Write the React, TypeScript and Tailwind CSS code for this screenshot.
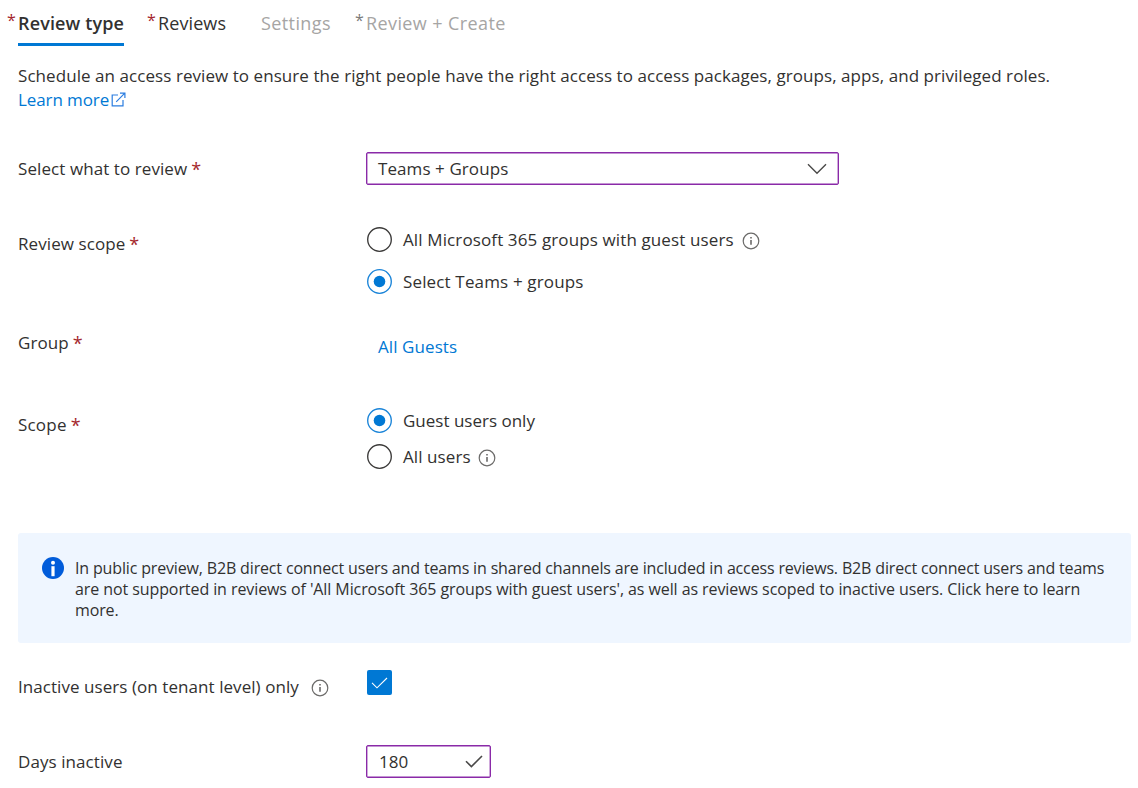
import type { ReactNode } from "react";

function InfoIcon({ className = "" }: { className?: string }) {
  return (
    <svg viewBox="0 0 18 18" className={`size-[18px] shrink-0 ${className}`} fill="none" stroke="#6b6a69">
      <circle cx="9" cy="9" r="7.8" strokeWidth="1.2" />
      <path d="M9 7.9v4.9M9 5v1.6" strokeWidth="1.6" />
    </svg>
  );
}

function Radio({ checked = false, children }: { checked?: boolean; children: ReactNode }) {
  return (
    <div className="flex h-[25px] items-center">
      <svg viewBox="0 0 25 25" className="size-[25px] shrink-0" fill="none">
        <circle cx="12.5" cy="12.5" r="11.8" stroke={checked ? "#1a84d8" : "#3b3a39"} strokeWidth="1.35" />
        {checked && <circle cx="12.5" cy="12.5" r="5.8" fill="#0078d4" />}
      </svg>
      <span className="ml-[11px] flex items-center">{children}</span>
    </div>
  );
}

function Star({ className = "" }: { className?: string }) {
  return <span className={`text-[18px] leading-6 font-medium text-[#a4262c] ${className}`}>*</span>;
}

function Label({ children, required = false, className = "" }: { children: ReactNode; required?: boolean; className?: string }) {
  return (
    <div className={`flex w-[348px] shrink-0 leading-6 ${className}`}>
      {children}
      {required && <Star className="ml-[4px] size-[9px]" />}
    </div>
  );
}

export default function App() {
  return (
    <div className="h-[788px] w-[1138px] overflow-hidden bg-white font-['Open_Sans','Noto_Sans',sans-serif] text-[17px] tracking-[0.08px] text-[#323130]">
      <nav className="flex h-[46px] pt-[11px] pl-[7px] text-[18px] leading-6 whitespace-nowrap">
        <div className="flex w-[140px]">
          <span className="w-[11px] text-[16px] leading-[18px] text-[#a4262c]">*</span>
          <span className="h-[35px] w-[106px] border-b-[3px] border-[#0078d4] font-semibold tracking-[0.14px]">Review type</span>
        </div>
        <div className="flex w-[114px]">
          <span className="w-[11px] text-[16px] leading-[18px] text-[#a4262c]">*</span>
          <span className="tracking-[0.1px]">Reviews</span>
        </div>
        <div className="w-[94px] tracking-[0.4px] text-[#a6a5a4]">Settings</div>
        <div className="flex text-[#a6a5a4]">
          <span className="w-[11px] text-[16px] leading-[18px] text-[#7b7a79]">*</span>
          <span className="tracking-[0.4px]">Review + Create</span>
        </div>
      </nav>

      <main className="pt-[18px] pl-[18px]">
        <p className="leading-6 tracking-[0.062px] whitespace-nowrap">
          Schedule an access review to ensure the right people have the right access to access packages, groups, apps, and privileged roles.
        </p>
        <a className="flex h-6 items-center leading-6 tracking-[-0.1px] text-[#0078d4]">
          Learn more
          <svg viewBox="0 0 15 15" className="mt-[-1px] ml-[2px] size-[15px]" fill="none" stroke="#2b7de0" strokeWidth="1.2">
            <path d="M7 3H1.2v10.8H12V8" />
            <path d="M5.2 9.8 13.8 1.2M9 1.1h4.9V6" />
          </svg>
        </a>

        <div className="mt-10 flex h-[34px]">
          <Label required className="pt-[5px]">Select what to review</Label>
          <div className="flex h-[33px] w-[473px] items-center justify-between rounded-[2px] border border-[#8a2aa8] pr-[11px] pl-[11px] shadow-[inset_0_0_0_0.4px_#8a2aa8]">
            <span className="leading-6">Teams + Groups</span>
            <svg viewBox="0 0 20 12" className="h-3 w-5" fill="none" stroke="#4a4948" strokeWidth="1.4">
              <path d="M1 1.2 10 10.2 19 1.2" />
            </svg>
          </div>
        </div>

        <div className="mt-[41px] flex h-[97px]">
          <Label required className="pt-[5px]">Review scope</Label>
          <div className="flex flex-col gap-[17px] pl-px">
            <Radio>
              <span className="tracking-[0.12px]">All Microsoft 365 groups with guest users</span>
              <InfoIcon className="mt-[2px] ml-[8px]" />
            </Radio>
            <Radio checked><span className="tracking-[0.15px]">Select Teams + groups</span></Radio>
          </div>
        </div>

        <div className="flex h-[84px]">
          <Label required className="pt-[7px]">Group</Label>
          <a className="pt-[11px] pl-3 leading-6 text-[#0078d4]">All Guests</a>
        </div>

        <div className="flex h-[125px]">
          <Label required className="pt-[5px]"><span className="tracking-[0.2px]">Scope</span></Label>
          <div className="flex flex-col gap-[11px] pl-px">
            <Radio checked><span className="tracking-[0px]">Guest users only</span></Radio>
            <Radio>
              All users
              <InfoIcon className="mt-[2px] ml-[7px]" />
            </Radio>
          </div>
        </div>

        <section className="flex h-[110px] w-[1113px] rounded-[3px] bg-[#eff6ff] pt-6 pl-6">
          <svg viewBox="0 0 22 22" className="mr-[11px] size-[22px] shrink-0">
            <circle cx="11" cy="11" r="11" fill="#015cda" />
            <circle cx="11" cy="5.8" r="2" fill="#fff" />
            <path d="M9.4 9.2h3.2v10H9.4z" fill="#fff" />
          </svg>
          <p className="pt-px text-[16px] leading-[21px] whitespace-nowrap">
            <span className="block tracking-[-0.157px]">In public preview, B2B direct connect users and teams in shared channels are included in access reviews. B2B direct connect users and teams</span>
            <span className="block tracking-[-0.084px]">are not supported in reviews of 'All Microsoft 365 groups with guest users', as well as reviews scoped to inactive users. Click here to learn</span>
            <span className="block tracking-[-0.12px]">more.</span>
          </p>
        </section>

        <div className="mt-[26px] flex h-[76px]">
          <Label className="items-start pt-[6px]">
            <span className="tracking-[0.06px]">Inactive users (on tenant level) only</span>
            <InfoIcon className="mt-[4px] ml-[12px]" />
          </Label>
          <div className="pt-[0.5px] pl-px">
            <div className="flex size-[25px] items-center justify-center rounded-[2px] bg-[#0078d4]">
              <svg viewBox="0 0 17 12" className="mt-px h-3 w-[17px]" fill="none" stroke="#fff" strokeWidth="1.1">
                <path d="M1 5.8 6 10.8 16 1" />
              </svg>
            </div>
          </div>
        </div>

        <div className="flex h-[34px]">
          <Label className="pt-[5px]">Days inactive</Label>
          <div className="flex h-[33px] w-[125px] items-center justify-between rounded-[2px] border border-[#8a2aa8] pr-[7px] pl-3 shadow-[inset_0_0_0_0.4px_#8a2aa8]">
            <span className="leading-6">180</span>
            <svg viewBox="0 0 18 13" className="h-[13px] w-[18px]" fill="none" stroke="#4a4948" strokeWidth="1.6">
              <path d="M1 6.2 6.4 11.6 17 1" />
            </svg>
          </div>
        </div>
      </main>
    </div>
  );
}
